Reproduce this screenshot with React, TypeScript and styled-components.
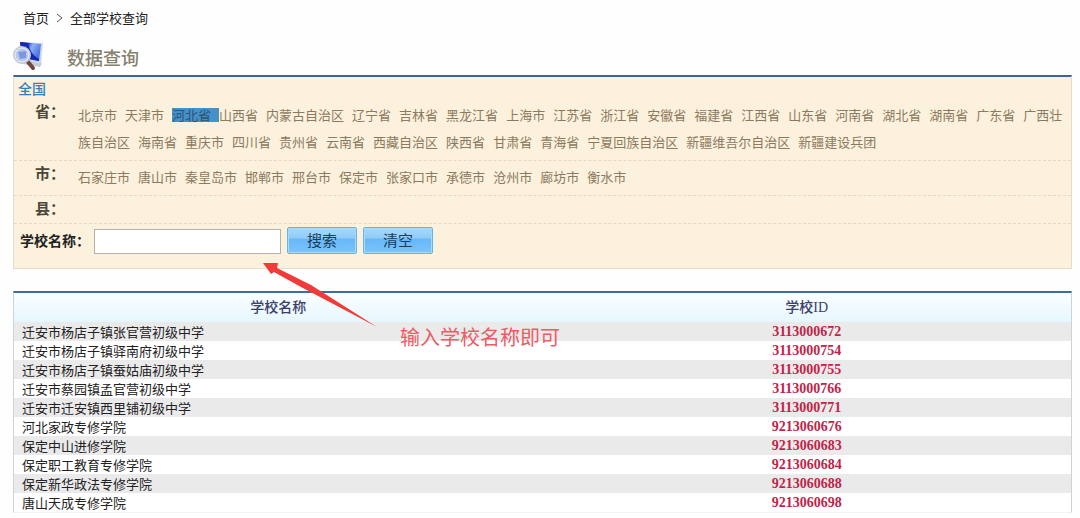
import React, { Fragment } from "react";
import styled, { createGlobalStyle } from "styled-components";

const GlobalStyle = createGlobalStyle`
  * { box-sizing: border-box; }
  body {
    margin: 0;
    background: #fefefe;
    color: #222;
    font: 13px/19px "Noto Sans CJK SC", sans-serif;
  }
  a { color: inherit; text-decoration: none; }
`;

const Page = styled.div`
  padding: 8px 8px 5px 13px;
`;

const Breadcrumb = styled.nav`
  display: flex;
  gap: 7px;
  padding-left: 10px;
`;

const Chevron = styled.svg`
  width: 7px;
  height: 19px;
`;

const Heading = styled.header`
  display: flex;
  align-items: center;
  gap: 23px;
  height: 34px;
  margin: 12px 0 2px;
`;

const Title = styled.h1`
  margin: 0;
  padding-top: 2px;
  font-size: 18px;
  line-height: 26px;
  font-weight: 500;
  color: #86816f;
`;

const Logo = styled.svg`
  width: 31px;
  height: 32px;
`;

const Panel = styled.form`
  position: relative;
  margin: 0 0 22px;
  padding-bottom: 14px;
  background: #fbf1dc;
  border: 1px solid #e3dccb;
  border-top: 2px solid #3f649b;
`;

const AllLink = styled.a`
  display: block;
  padding-left: 4px;
  font-size: 14px;
  line-height: 22px;
  font-weight: 500;
  color: #3b7db9;
`;

const Region = styled.div<{ $pad: number }>`
  display: grid;
  grid-template-columns: 64px 1fr;
  padding-bottom: ${(p) => p.$pad}px;
  border-bottom: 1px dashed #e5d9bf;
  line-height: 27px;
`;

const RegionName = styled.strong`
  padding-left: 21px;
  font-size: 15px;
  line-height: 24px;
  color: #4c473a;
`;

const Places = styled.div`
  color: #8c7a60;
  padding: 2px 4px 0 0;
`;

const Place = styled.a<{ $active?: boolean }>`
  padding-right: 8px;
  ${(p) =>
    p.$active &&
    `
    color: #2c5475;
    background: linear-gradient(#4490c9, #4490c9) center / 100% 14px no-repeat;
  `}
`;

const SearchRow = styled.div`
  display: flex;
  align-items: center;
  gap: 6px;
  padding: 2px 0 0 6px;
`;

const Label = styled.label`
  width: 68px;
  font-size: 14px;
  font-weight: 700;
  white-space: nowrap;
  color: #222;
`;

const NameInput = styled.input`
  width: 187px;
  height: 25px;
  margin-top: 3px;
  padding: 0 4px;
  border: 1px solid #b5b2ad;
  background: #fff;
  font: inherit;
`;

const Button = styled.button`
  width: 70px;
  height: 27px;
  padding: 0;
  border: 1px solid #63b4e8;
  border-radius: 2px;
  box-shadow: inset 0 0 0 1px #a6dcfc;
  background: linear-gradient(#a9d8fa 0%, #91cbf8 40%, #68b7f7 45%, #7cc4fb 100%);
  color: #1d3c58;
  font: 15px/24px "Noto Sans CJK SC", sans-serif;
`;

const Arrow = styled.svg`
  position: absolute;
  z-index: 1;
  left: 249px;
  top: 185px;
  width: 116px;
  height: 68px;
  pointer-events: none;
`;

const Note = styled.p`
  position: absolute;
  z-index: 1;
  left: 386px;
  top: 246px;
  margin: 0;
  font-size: 20px;
  line-height: 28px;
  color: #ec5b66;
  white-space: nowrap;
`;

const Table = styled.table`
  width: 100%;
  table-layout: fixed;
  border-collapse: separate;
  border-spacing: 0;
  border: 1px solid #c9d3dc;
  border-top: 2px solid #3f6d9f;
  border-bottom-color: #f3f3f3;
`;

const HeadCell = styled.th`
  height: 29px;
  padding: 0;
  background: linear-gradient(#fbffff, #e6f6fe);
  font-family: "Liberation Serif", "Noto Sans CJK SC", serif;
  font-size: 14px;
  font-weight: 500;
  color: #39406b;
`;

const Row = styled.tr`
  &:nth-child(odd) { background: #ebeaeb; }
  &:nth-child(even) { background: #fff; }
`;

const NameCell = styled.td`
  height: 19px;
  padding: 0 8px;
`;

const IdCell = styled.td`
  padding: 0;
  text-align: center;
  font-family: "Liberation Serif", serif;
  font-size: 14px;
  font-weight: 700;
  color: #c02449;
`;

const provinces =
  "北京市 天津市 河北省 山西省 内蒙古自治区 辽宁省 吉林省 黑龙江省 上海市 江苏省 浙江省 安徽省 福建省 江西省 山东省 河南省 湖北省 湖南省 广东省 广西壮族自治区 海南省 重庆市 四川省 贵州省 云南省 西藏自治区 陕西省 甘肃省 青海省 宁夏回族自治区 新疆维吾尔自治区 新疆建设兵团".split(" ");

const cities =
  "石家庄市 唐山市 秦皇岛市 邯郸市 邢台市 保定市 张家口市 承德市 沧州市 廊坊市 衡水市".split(" ");

const schools = [
  ["迁安市杨店子镇张官营初级中学", "3113000672"],
  ["迁安市杨店子镇驿南府初级中学", "3113000754"],
  ["迁安市杨店子镇蚕姑庙初级中学", "3113000755"],
  ["迁安市蔡园镇孟官营初级中学", "3113000766"],
  ["迁安市迁安镇西里铺初级中学", "3113000771"],
  ["河北家政专修学院", "9213060676"],
  ["保定中山进修学院", "9213060683"],
  ["保定职工教育专修学院", "9213060684"],
  ["保定新华政法专修学院", "9213060688"],
  ["唐山天成专修学院", "9213060698"],
];

function PlaceList({ names, active }: { names: string[]; active?: string }) {
  return (
    <Places>
      {names.map((name) => (
        <Fragment key={name}>
          <Place href="#" $active={name === active}>{name}</Place>
          <wbr />
        </Fragment>
      ))}
    </Places>
  );
}

function QueryLogo() {
  return (
    <Logo viewBox="0 0 31 32" aria-hidden="true">
      <defs>
        <linearGradient id="screen" x1="0" y1="0" x2="1" y2="0.5">
          <stop offset="0" stopColor="#1420a0" />
          <stop offset="0.35" stopColor="#2438d0" />
          <stop offset="0.55" stopColor="#8fb0f4" />
          <stop offset="1" stopColor="#4a70dc" />
        </linearGradient>
      </defs>
      <path d="M10 24 L27 27 L29 23 L13 20Z" fill="#c6cad3" />
      <path d="M7 2 L30 3 L28 24 L9 20Z" fill="#cdd6e8" />
      <path d="M7 2 L28 4 L26 21 L10 18Z" fill="url(#screen)" />
      <path d="M7 2 L15 3 Q17 14 26 19 L26 21 L10 18Z" fill="#1826b5" />
      <path d="M15 22 L20 28" stroke="#70473c" strokeWidth="4" strokeLinecap="round" />
      <circle cx="9" cy="15" r="8" fill="#b9c9ee" stroke="#c3c9d2" strokeWidth="2" />
      <circle cx="9" cy="15" r="7" fill="none" stroke="#edf2fa" />
      <path d="M5 12 L13 11 L13 18 L7 19Z" fill="#7e96df" />
    </Logo>
  );
}

export default function App() {
  return (
    <Page>
      <GlobalStyle />
      <Breadcrumb aria-label="breadcrumb">
        <a href="#">首页</a>
        <Chevron viewBox="0 0 7 19" aria-hidden="true">
          <path d="M1 6 L6 10 L1 14" fill="none" stroke="#555" />
        </Chevron>
        <a href="#">全部学校查询</a>
      </Breadcrumb>
      <Heading>
        <QueryLogo />
        <Title>数据查询</Title>
      </Heading>
      <Panel onSubmit={(e) => e.preventDefault()}>
        <AllLink href="#">全国</AllLink>
        <Region $pad={5}>
          <RegionName>省：</RegionName>
          <PlaceList names={provinces} active="河北省" />
        </Region>
        <Region $pad={5}>
          <RegionName>市：</RegionName>
          <PlaceList names={cities} />
        </Region>
        <Region $pad={3}>
          <RegionName>县：</RegionName>
        </Region>
        <SearchRow>
          <Label htmlFor="school">学校名称：</Label>
          <NameInput id="school" type="text" />
          <Button type="submit">搜索</Button>
          <Button type="reset">清空</Button>
        </SearchRow>
        <Arrow viewBox="0 0 116 68" aria-hidden="true">
          <path d="M0 1 L15 1 L14 6 L48 23 L114 65 L38 25 L11 10 L8 12Z" fill="#f23b38" />
        </Arrow>
        <Note>输入学校名称即可</Note>
      </Panel>
      <Table>
        <thead>
          <tr>
            <HeadCell scope="col">学校名称</HeadCell>
            <HeadCell scope="col">学校ID</HeadCell>
          </tr>
        </thead>
        <tbody>
          {schools.map(([name, id]) => (
            <Row key={id}>
              <NameCell>{name}</NameCell>
              <IdCell>{id}</IdCell>
            </Row>
          ))}
        </tbody>
      </Table>
    </Page>
  );
}
